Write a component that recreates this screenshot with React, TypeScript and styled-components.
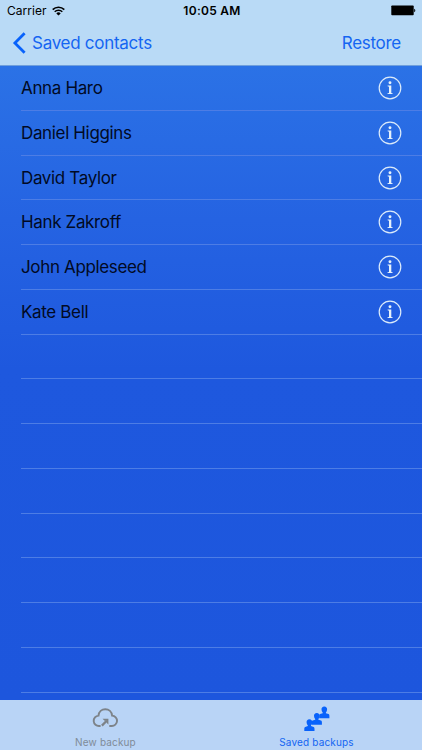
import React from 'react'
import styled, { createGlobalStyle } from 'styled-components'

const GlobalStyle = createGlobalStyle`
  * {
    box-sizing: border-box;
  }

  body {
    margin: 0;
    font-family: Inter, 'Liberation Sans', sans-serif;
  }
`

const Screen = styled.div`
  display: flex;
  flex-direction: column;
  width: 422px;
  height: 750px;
  overflow: hidden;
  background: linear-gradient(#2b72e6 65px, #2563e2 220px, #1e58de 370px, #1d56dd 700px);
`

const Header = styled.header`
  height: 66px;
  flex: none;
  background-color: #b9daf6;
  border-bottom: 1px solid #6f9fdc;
`

const StatusBar = styled.div`
  display: grid;
  grid-template-columns: 1fr auto 1fr;
  align-items: center;
  height: 21px;
  padding: 0 6px 0 7px;
  color: #000;
`

const Carrier = styled.div`
  display: flex;
  align-items: center;
  gap: 5px;
  font-size: 12px;
  letter-spacing: 0.05px;
`

const Clock = styled.div`
  padding-left: 1px;
  font-size: 12px;
  font-weight: 600;
  letter-spacing: 0.28px;
`

const Battery = styled.svg`
  justify-self: end;
`

const NavBar = styled.nav`
  display: flex;
  align-items: center;
  justify-content: space-between;
  height: 44px;
  padding: 0 21px 0 12px;
`

const NavButton = styled.button`
  display: flex;
  align-items: center;
  gap: 6px;
  padding: 0;
  border: none;
  background: none;
  color: #1465f2;
  font-family: inherit;
  font-size: 17px;
  letter-spacing: -0.28px;
`

const ContactList = styled.ul`
  flex: 1;
  min-height: 0;
  margin: 0;
  padding: 0 0 0 21px;
  overflow: hidden;
  list-style: none;
`

const ContactRow = styled.li`
  display: flex;
  align-items: center;
  justify-content: space-between;
  height: 44.75px;
  padding: 0.6px 20px 0 0;
  border-bottom: 1px solid #4d7de5;
  color: #010a24;
  font-size: 17px;
  letter-spacing: -0.35px;
`

const TabBar = styled.footer`
  display: flex;
  flex: none;
  height: 50px;
  background-color: #b9d4f6;
`

const Tab = styled.div<{ $active?: boolean }>`
  display: flex;
  flex: 1;
  flex-direction: column;
  align-items: center;
  justify-content: space-between;
  padding: 6px 0 1px;
  color: ${({ $active }) => ($active ? '#1465f2' : '#808b98')};
  font-size: 10px;
  line-height: 13px;
  letter-spacing: 0.15px;
`

const contacts = [
  'Anna Haro',
  'Daniel Higgins',
  'David Taylor',
  'Hank Zakroff',
  'John Appleseed',
  'Kate Bell',
]

const EMPTY_ROWS = 8

function WifiIcon() {
  return (
    <svg width="13" height="10" viewBox="0 0 13 10" fill="none" stroke="#000">
      <path d="M0.7 3.6a8.3 8.3 0 0 1 11.6 0" strokeWidth="1.7" />
      <path d="M2.7 5.8a5.3 5.3 0 0 1 7.6 0" strokeWidth="1.5" />
      <path d="M4.3 7.4a3.1 3.1 0 0 1 4.4 0L6.5 9.6z" fill="#000" stroke="none" />
    </svg>
  )
}

function BatteryIcon() {
  return (
    <Battery width="25" height="11" viewBox="0 0 25 11">
      <rect x="0.3" y="0.5" width="22.4" height="9.8" rx="0.8" fill="#000" />
      <path d="M23.2 3.7c1.5.3 1.5 3.2 0 3.5z" fill="#000" />
    </Battery>
  )
}

function BackIcon() {
  return (
    <svg width="14" height="22" viewBox="0 0 14 22" fill="none">
      <path d="M12.6 1.2 2.9 11l9.7 9.8" stroke="#0862fb" strokeWidth="2.8" />
    </svg>
  )
}

function InfoIcon() {
  return (
    <svg width="24" height="24" viewBox="0 0 24 24">
      <circle cx="12" cy="12" r="10.8" fill="none" stroke="#dcebfa" strokeWidth="1.2" />
      <circle cx="12" cy="6.7" r="1.45" fill="#e6f2fb" />
      <path d="M9.6 9.5h3.7v7.4l1.3.4v.8H9.5v-.8l1.5-.4v-6.2l-1.4-.4z" fill="#e6f2fb" />
    </svg>
  )
}

function CloudIcon() {
  return (
    <svg width="27" height="22" viewBox="0 0 27 22" fill="none" stroke="#7d8389" strokeWidth="1.9">
      <path d="M8.6 20H7.3a5.2 5.2 0 0 1-.8-10.4C6.9 5.8 9.7 3.3 13.3 3.3s6.4 2.5 6.8 6.3a5.2 5.2 0 0 1-.5 10.4h-2.3" />
      <path d="M9.9 19.6l4.8-4.8" strokeWidth="2.3" />
      <path d="M10.6 12.8h5.8v5.8l-1.9-1.9V14.700h-2z" fill="#7d8389" stroke="none" />
    </svg>
  )
}

const Person = ({ x, y }: { x: number; y: number }) => (
  <path
    transform={`translate(${x} ${y})`}
    d="M5.1 0C7 0 8 1.3 7.9 3.1c-.1 1.200-.5 2.200-1.200 2.900v.8l2.600.9c.7.3.9 1 .9 1.9v2.2H0V9.6c0-.9.2-1.6.9-1.9l2.6-.9V6c-.7-.7-1.1-1.7-1.2-2.9C2.2 1.3 3.2 0 5.1 0z"
  />
)

function PeopleIcon() {
  return (
    <svg width="26" height="26" viewBox="0 0 26 26" fill="#0862fb">
      <Person x={15.2} y={0.4} />
      <Person x={7.7} y={6.9} />
      <Person x={0.3} y={13.3} />
    </svg>
  )
}

function App() {
  return (
    <>
      <GlobalStyle />
      <Screen>
        <Header>
          <StatusBar>
            <Carrier>
              Carrier
              <WifiIcon />
            </Carrier>
            <Clock>10:05 AM</Clock>
            <BatteryIcon />
          </StatusBar>
          <NavBar>
            <NavButton>
              <BackIcon />
              Saved contacts
            </NavButton>
            <NavButton>Restore</NavButton>
          </NavBar>
        </Header>
        <ContactList>
          {contacts.map((name) => (
            <ContactRow key={name}>
              {name}
              <InfoIcon />
            </ContactRow>
          ))}
          {Array.from({ length: EMPTY_ROWS }, (_, i) => (
            <ContactRow key={i} />
          ))}
        </ContactList>
        <TabBar>
          <Tab>
            <CloudIcon />
            New backup
          </Tab>
          <Tab $active>
            <PeopleIcon />
            Saved backups
          </Tab>
        </TabBar>
      </Screen>
    </>
  )
}

export default App
